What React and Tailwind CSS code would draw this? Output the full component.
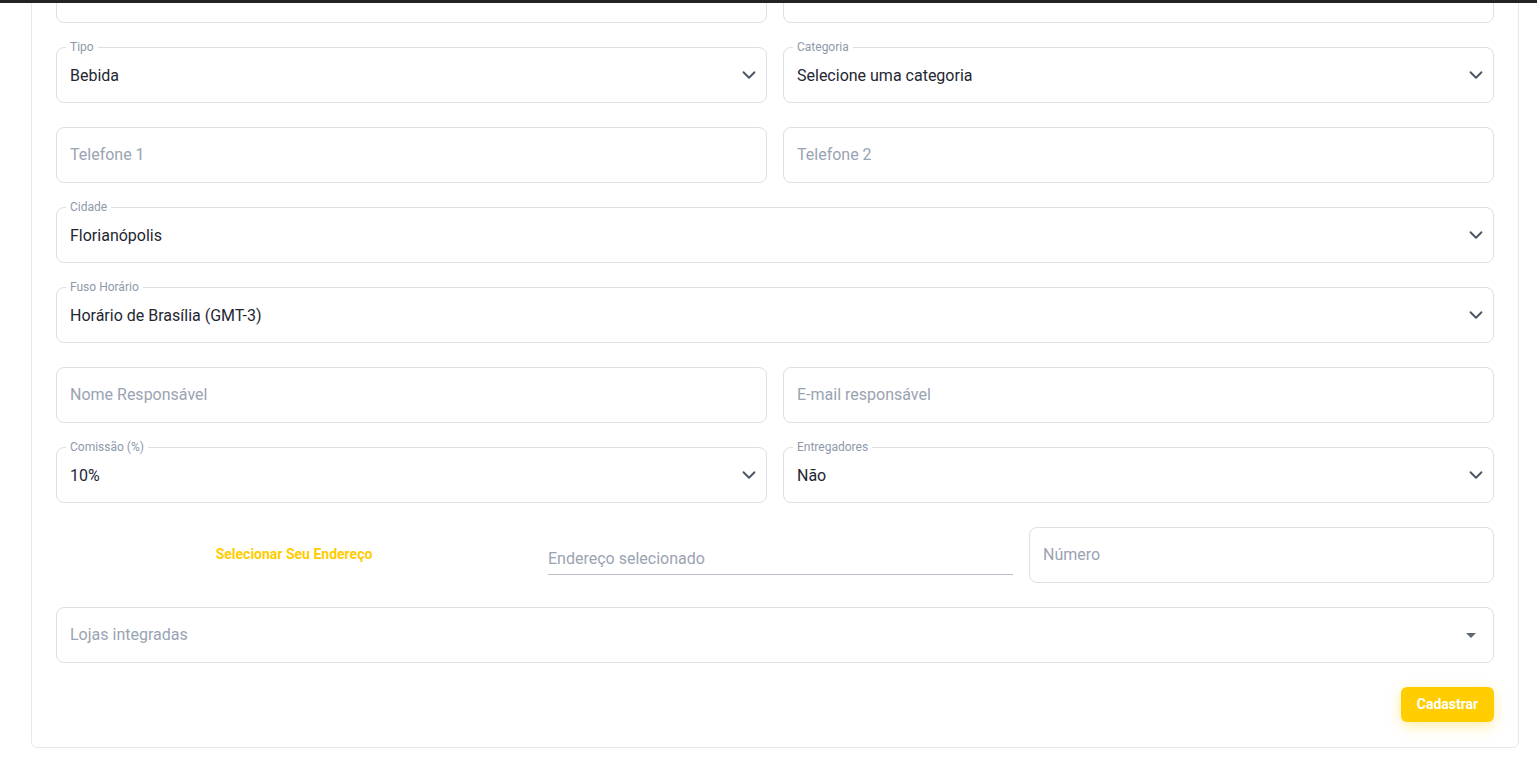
import { ChevronDown } from "lucide-react";

const Field = ({ label, value, placeholder, select }) => (
  <div className={`relative h-14 rounded-lg border border-[#dcdfe4] bg-white flex items-center pl-[13px] pr-[6px] ${label ? "pt-[2px]" : ""}`}>
    {label && (
      <span className="absolute left-[9px] top-[-9px] px-1 bg-white text-xs leading-4 text-[#8e99ab]">
        {label}
      </span>
    )}
    <span className={`flex-1 text-base ${value ? "text-[#1f2733]" : "text-[#9aa3b2]"}`}>
      {value || placeholder}
    </span>
    {select && <ChevronDown size={22} strokeWidth={2} className="text-[#4a5361] -mt-[2px]" />}
  </div>
);

const App = () => {
  return (
    <div className="relative h-screen overflow-hidden bg-white" style={{ fontFamily: "Roboto, 'Noto Sans', sans-serif" }}>
      <div className="absolute top-0 left-0 right-0 h-[3px] bg-[#232323] z-10" />

      <div className="ml-[31px] w-[1488px] mt-[-58px] rounded-md border border-[#e8e9eb] bg-white px-6 pt-6 pb-[25px]">
        <div className="flex flex-col gap-6">
          {/* row cut off by the scroll position */}
          <div className="grid grid-cols-2 gap-4">
            <Field />
            <Field />
          </div>
          <div className="grid grid-cols-2 gap-4">
            <Field label="Tipo" value="Bebida" select />
            <Field label="Categoria" value="Selecione uma categoria" select />
          </div>
          <div className="grid grid-cols-2 gap-4">
            <Field placeholder="Telefone 1" />
            <Field placeholder="Telefone 2" />
          </div>
          <Field label="Cidade" value="Florianópolis" select />
          <Field label="Fuso Horário" value="Horário de Brasília (GMT-3)" select />
          <div className="grid grid-cols-2 gap-4">
            <Field placeholder="Nome Responsável" />
            <Field placeholder="E-mail responsável" />
          </div>
          <div className="grid grid-cols-2 gap-4">
            <Field label="Comissão (%)" value="10%" select />
            <Field label="Entregadores" value="Não" select />
          </div>
          <div className="grid grid-cols-[476px_1fr_1fr] gap-4">
            <div className="h-14 flex items-center justify-center pb-[3px]">
              <button className="text-sm font-bold text-[#ffcc00]">Selecionar Seu Endereço</button>
            </div>
            <div className="pt-4">
              <div className="h-8 border-b border-[#b9c0ca] flex items-center">
                <span className="text-base text-[#9aa3b2]">Endereço selecionado</span>
              </div>
            </div>
            <Field placeholder="Número" />
          </div>
          <div className="relative h-14 rounded-lg border border-[#dcdfe4] flex items-center pl-[13px] pr-[10px]">
            <span className="flex-1 text-base text-[#9aa3b2]">Lojas integradas</span>
            <svg width="24" height="24" viewBox="0 0 24 24" className="fill-[#5f6775]">
              <path d="M7 10l5 5 5-5z" />
            </svg>
          </div>
          <div className="flex justify-end">
            <button className="h-[35px] w-[93px] rounded-md bg-[#ffcd00] pb-px text-sm font-bold text-white shadow-[0_4px_14px_rgba(255,204,0,0.35)]">
              Cadastrar
            </button>
          </div>
        </div>
      </div>
    </div>
  );
};

export default App;
